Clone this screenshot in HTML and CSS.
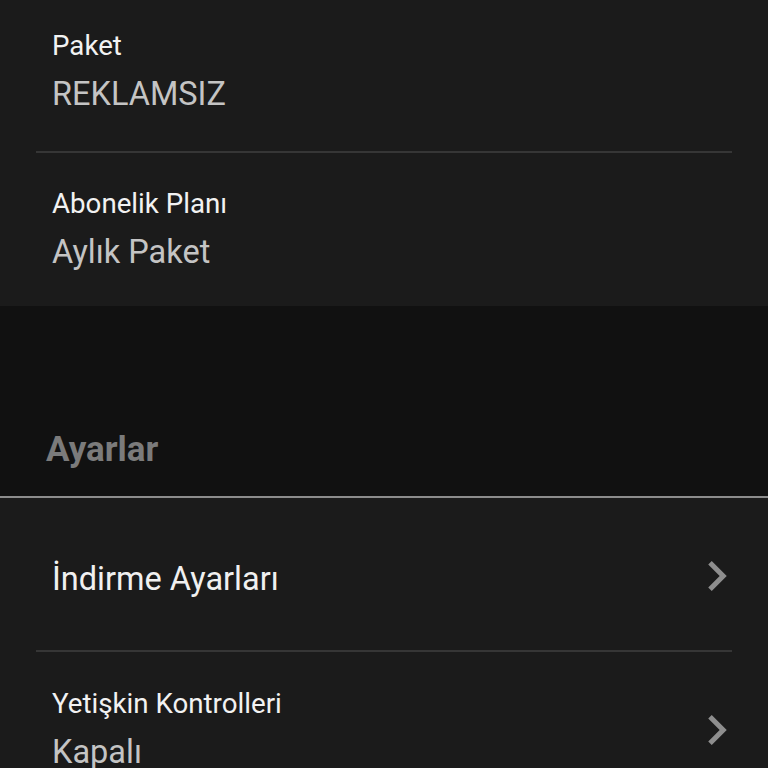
FILE: index.html
```html
<!DOCTYPE html>
<html lang="tr">
<head>
    <meta charset="UTF-8">
    <meta name="viewport" content="width=device-width, initial-scale=1.0">
    <title>Hesap</title>
    <link rel="stylesheet" href="styles.css">
</head>
<body>
    <section class="panel">
        <div class="item first">
            <div class="label">Paket</div>
            <div class="value">REKLAMSIZ</div>
        </div>
        <div class="item last">
            <div class="label">Abonelik Planı</div>
            <div class="value">Aylık Paket</div>
        </div>
    </section>

    <div class="section-head">
        <h2>Ayarlar</h2>
    </div>

    <section class="panel list">
        <div class="row single">
            <div class="title">İndirme Ayarları</div>
            <svg class="chevron up" viewBox="8.2 5.6 8.2 12.8" width="21" height="32">
                <path d="M10 6L8.59 7.41 13.17 12l-4.58 4.59L10 18l6-6z"/>
            </svg>
        </div>
        <div class="row">
            <div class="text">
                <div class="label">Yetişkin Kontrolleri</div>
                <div class="value">Kapalı</div>
            </div>
            <svg class="chevron" viewBox="8.2 5.6 8.2 12.8" width="21" height="32">
                <path d="M10 6L8.59 7.41 13.17 12l-4.58 4.59L10 18l6-6z"/>
            </svg>
        </div>
    </section>
</body>
</html>
```

FILE: styles.css
```css
html {
    overflow: hidden;
}

body {
    font-family: Roboto, "Liberation Sans", sans-serif;
    margin: 0;
    padding: 0;
    background-color: #111111;
    color: #f0f0f0;
}

.panel {
    background-color: #1b1b1b;
}

.item {
    margin: 0 36px;
    padding: 35px 4px 37px 16px;
    border-bottom: 2px solid #363636;
}

.item.first {
    padding-top: 30px;
}

.item.last {
    border-bottom: none;
    padding-bottom: 34px;
}

.label {
    font-size: 27.7px;
    line-height: 32px;
    color: #f2f2f2;
}

.value {
    font-size: 32.5px;
    line-height: 40px;
    margin-top: 12px;
    color: #c4c4c4;
}

/* Başlık alanı */
.section-head {
    padding: 124px 46px 26px;
    border-bottom: 2px solid #8c8c8c;
}

.section-head h2 {
    margin: 0;
    font-size: 35px;
    line-height: 40px;
    font-weight: bold;
    color: #7b7b7b;
}

.list {
    min-height: 300px;
}

.row {
    display: flex;
    align-items: center;
    justify-content: space-between;
    margin: 0 36px;
    padding: 36px 4px 36px 16px;
    border-bottom: 2px solid #363636;
}

.row.single {
    padding-top: 61px;
    padding-bottom: 51px;
}

.row:last-child {
    border-bottom: none;
}

.title {
    font-size: 32.5px;
    line-height: 40px;
    color: #f0f0f0;
}

.chevron {
    fill: #8e8e8e;
    flex-shrink: 0;
}

.chevron.up {
    margin-bottom: 6px;
}
```
